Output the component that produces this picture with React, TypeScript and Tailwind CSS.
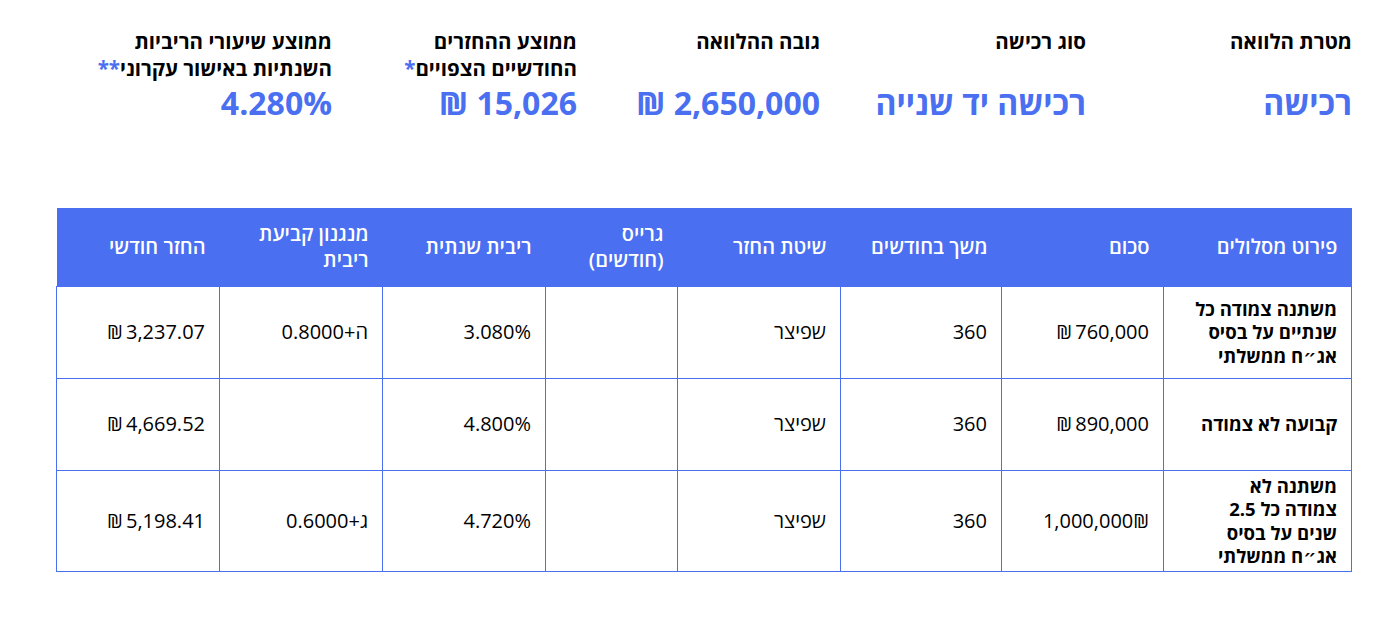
import React from "react";

type Stat = { title: React.ReactNode; value: string };

const stats: Stat[] = [
  { title: "מטרת הלוואה", value: "רכישה" },
  { title: "סוג רכישה", value: "רכישה יד שנייה" },
  { title: "גובה ההלוואה", value: "2,650,000 ₪" },
  {
    title: (
      <>
        ממוצע ההחזרים
        <br />
        החודשיים הצפויים<span className="text-[#4a6ff0]">*</span>
      </>
    ),
    value: "15,026 ₪",
  },
  {
    title: (
      <>
        ממוצע שיעורי הריביות
        <br />
        השנתיות באישור עקרוני<span className="text-[#4a6ff0]">**</span>
      </>
    ),
    value: "4.280%",
  },
];

const headers: React.ReactNode[] = [
  "פירוט מסלולים",
  "סכום",
  "משך בחודשים",
  "שיטת החזר",
  <>
    גרייס
    <br />
    (חודשים)
  </>,
  "ריבית שנתית",
  <>
    מנגנון קביעת
    <br />
    ריבית
  </>,
  "החזר חודשי",
];

const colWidths = [188, 162, 161, 163, 132, 163, 163, 163];

type Row = {
  name: string[];
  amount: string;
  months: string;
  method: string;
  grace: string;
  rate: string;
  mech: string;
  monthly: string;
  h: string;
};

const rows: Row[] = [
  {
    name: ["משתנה צמודה כל", "שנתיים על בסיס", "אג״ח ממשלתי"],
    amount: "760,000\u2009₪",
    months: "360",
    method: "שפיצר",
    grace: "",
    rate: "3.080%",
    mech: "ה+0.8000",
    monthly: "3,237.07\u2009₪",
    h: "h-[92px]",
  },
  {
    name: ["קבועה לא צמודה"],
    amount: "890,000\u2009₪",
    months: "360",
    method: "שפיצר",
    grace: "",
    rate: "4.800%",
    mech: "",
    monthly: "4,669.52\u2009₪",
    h: "h-[92px]",
  },
  {
    name: ["משתנה לא", "צמודה כל 2.5", "שנים על בסיס", "אג״ח ממשלתי"],
    amount: "1,000,000₪",
    months: "360",
    method: "שפיצר",
    grace: "",
    rate: "4.720%",
    mech: "ג+0.6000",
    monthly: "5,198.41\u2009₪",
    h: "h-[101px]",
  },
];

const App: React.FC = () => {
  return (
    <div
      dir="rtl"
      className="min-h-[621px] bg-white pr-[27px] pl-[57px] pt-[28px] text-black"
      style={{ fontFamily: "'Open Sans', 'DejaVu Sans', sans-serif" }}
    >
      <div className="grid grid-cols-[266px_266px_243px_245px_1fr]">
        {stats.map((s, i) => (
          <div key={i} className="flex flex-col">
            <div className="h-[54px] text-[20.5px] font-bold leading-[27px]">{s.title}</div>
            <div className="text-[32px] font-bold leading-[42px] text-[#4a6ff0]">{s.value}</div>
          </div>
        ))}
      </div>

      <table className="mt-[84px] w-full table-fixed border-collapse">
        <colgroup>
          {colWidths.map((w, i) => (
            <col key={i} style={{ width: w }} />
          ))}
        </colgroup>
        <thead>
          <tr className="h-[78px] bg-[#4a6ff0]">
            {headers.map((h, i) => (
              <th
                key={i}
                className="px-[14px] text-right align-middle text-[20px] font-semibold leading-[26px] text-white"
              >
                {h}
              </th>
            ))}
          </tr>
        </thead>
        <tbody>
          {rows.map((r, i) => (
            <tr key={i} className={r.h}>
              <td className="border border-[#4a6ff0] px-[14px] py-[3px] text-right align-middle text-[18.5px] font-bold leading-[23.5px]">
                {r.name.map((l, j) => (
                  <div key={j} className="whitespace-nowrap">
                    {l}
                  </div>
                ))}
              </td>
              {[r.amount, r.months, r.method, r.grace, r.rate, r.mech, r.monthly].map((c, j) => (
                <td
                  key={j}
                  className="border border-[#4a6ff0] px-[14px] text-right align-middle text-[20px] leading-[24px]"
                >
                  {c}
                </td>
              ))}
            </tr>
          ))}
        </tbody>
      </table>
    </div>
  );
};

export default App;
